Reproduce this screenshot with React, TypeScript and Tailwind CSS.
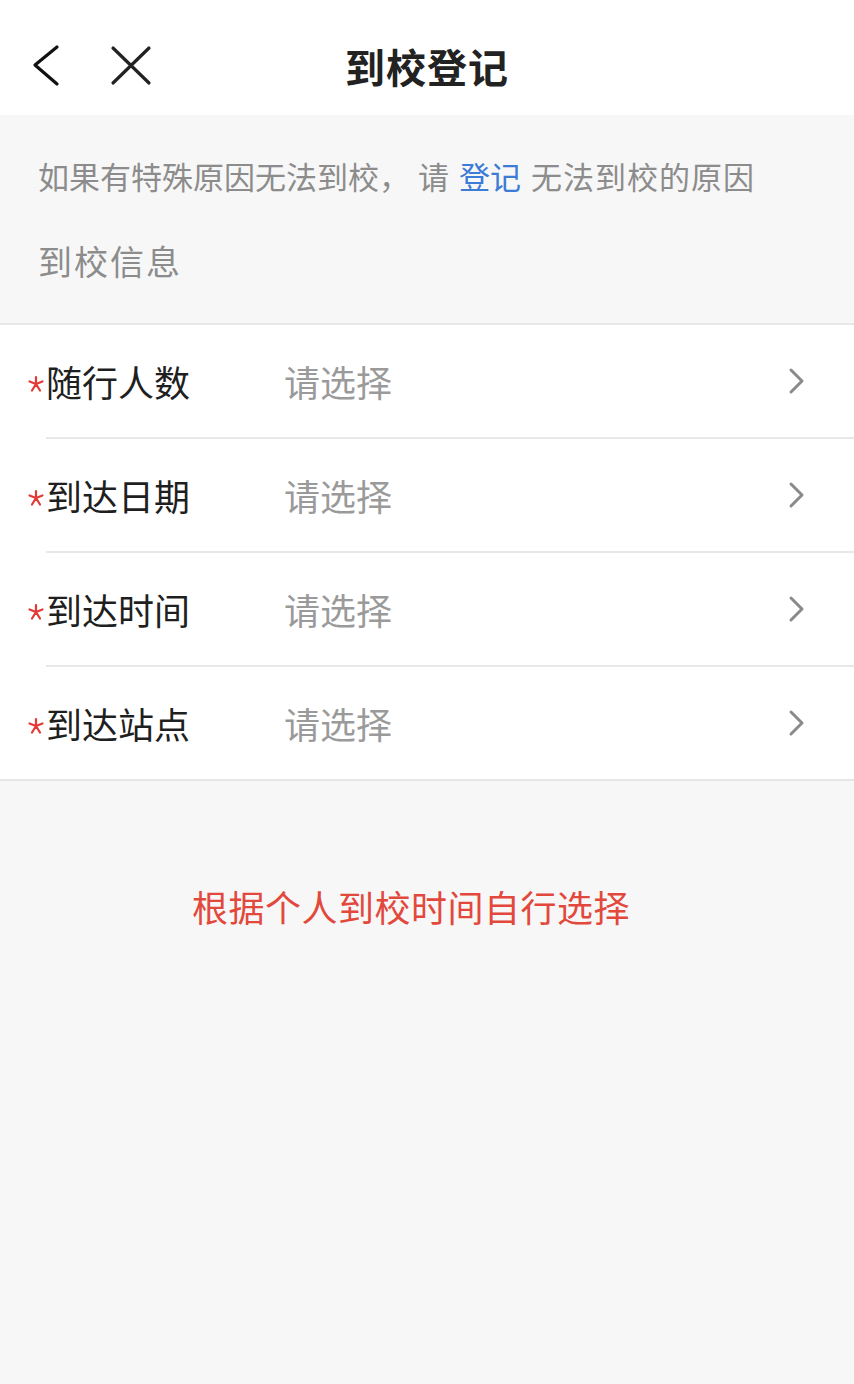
import React from "react";

const rows = ["随行人数", "到达日期", "到达时间", "到达站点"];

function Chevron() {
  return (
    <svg width="18" height="28" viewBox="0 0 18 28" fill="none">
      <path d="M3 3 L14 14 L3 25" stroke="#8a8a8a" strokeWidth="3" strokeLinecap="round" strokeLinejoin="round" />
    </svg>
  );
}

function Star() {
  return (
    <svg className="mt-[6px]" width="18" height="18" viewBox="0 0 18 18" fill="none">
      <path
        d="M9 2 L9 9 M9 9 L2.5 6.5 M9 9 L15.5 6.5 M9 9 L5 15.5 M9 9 L13 15.5"
        stroke="#e53935"
        strokeWidth="2.2"
        strokeLinecap="round"
      />
    </svg>
  );
}

export default function App() {
  const font = { fontFamily: '"Noto Sans CJK SC", "Noto Sans", sans-serif' };
  return (
    <div className="min-h-screen bg-[#f7f7f7]" style={font}>
      <div className="grid h-[115px] grid-cols-[1fr_auto_1fr] items-center bg-white pt-[16px]">
        <div className="flex items-center pl-[31px]">
          <svg width="30" height="44" viewBox="0 0 30 44" fill="none">
            <path d="M26 3 L4 21 L26 40" stroke="#111" strokeWidth="3.2" strokeLinecap="round" strokeLinejoin="round" />
          </svg>
          <svg className="ml-[49px]" width="42" height="42" viewBox="0 0 42 42" fill="none">
            <path d="M3 3 L39 38 M39 3 L3 38" stroke="#222" strokeWidth="3.2" strokeLinecap="round" />
          </svg>
        </div>
        <div className="text-[40px] font-bold leading-none tracking-[1px] text-[#222]">到校登记</div>
        <div />
      </div>

      <div className="border-b-2 border-[#e8e8e8] pl-[38px] pt-[30px] pb-[31px]">
        <div className="flex text-[31px] leading-[62px] text-[#8c8c8c]">
          <span>如果有特殊原因无法到校，</span>
          <span className="ml-[8px]">请</span>
          <span className="ml-[10px] text-[#3c7bd6]">登记</span>
          <span className="ml-[10px] tracking-[1px]">无法到校的原因</span>
        </div>
        <div className="mt-[23px] text-[34px] leading-[62px] tracking-[2px] text-[#8c8c8c]">到校信息</div>
      </div>

      <div className="border-b-2 border-[#e6e6e6] bg-white">
        {rows.map((r, i) => (
          <div
            key={r}
            className={
              i < rows.length - 1
                ? "ml-[46px] flex h-[114px] items-center border-b-2 border-[#e8e8e8] pr-[48px]"
                : "ml-[46px] flex h-[112px] items-center pr-[48px]"
            }
          >
            <div className="-ml-[19px] flex w-[257px] items-center">
              <span className="flex w-[19px] justify-start">
                <Star />
              </span>
              <span className="text-[36px] leading-none text-[#1f1f1f]">{r}</span>
            </div>
            <span className="flex-1 text-[36px] leading-none text-[#9a9a9a]">请选择</span>
            <Chevron />
          </div>
        ))}
      </div>

      <div className="mt-[100px] pr-[32px] text-center text-[36px] leading-[50px] tracking-[0.5px] text-[#e2483c]">
        根据个人到校时间自行选择
      </div>
    </div>
  );
}
